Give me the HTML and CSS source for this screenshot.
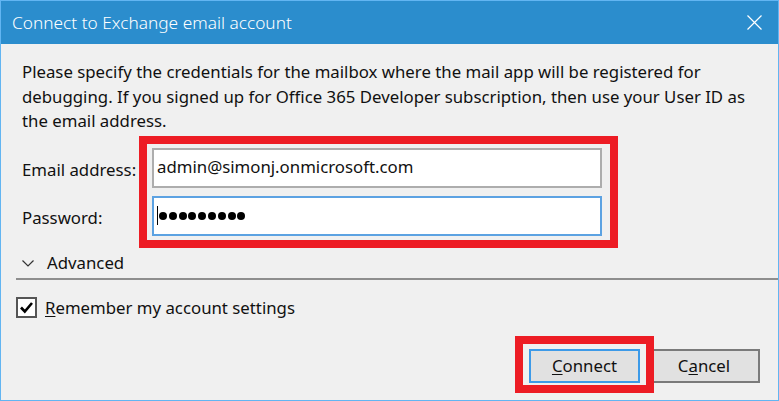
FILE: index.html
```html
<!DOCTYPE html>
<html>
<head>
<meta charset="utf-8">
<link rel="stylesheet" href="styles.css">
</head>
<body>
<div class="window">
  <div class="titlebar">
    <span class="title">Connect to Exchange email account</span>
    <svg class="close" width="15" height="15" viewBox="0 0 15 15"><path d="M0.5 0.5 L14.5 14.5 M14.5 0.5 L0.5 14.5" stroke="#fff" stroke-width="1.2" fill="none"/></svg>
  </div>
  <div class="content">
    <p class="intro">Please specify the credentials for the mailbox where the mail app will be registered for debugging. If you signed up for Office 365 Developer subscription, then use your User ID as the email address.</p>
    <div class="form">
      <div class="labels">
        <div class="label">Email address:</div>
        <div class="label">Password:</div>
      </div>
      <div class="highlight">
        <div class="input">admin@simonj.onmicrosoft.com</div>
        <div class="input focused"><span class="caret"></span><span class="dots"><i></i><i></i><i></i><i></i><i></i><i></i><i></i><i></i><i></i></span></div>
      </div>
    </div>
    <div class="advanced">
      <svg class="chev" width="12" height="7" viewBox="0 0 12 7"><path d="M0.5 0.5 L6 6 L11.5 0.5" stroke="#333" stroke-width="1.2" fill="none"/></svg>
      <span>Advanced</span>
    </div>
    <div class="sep"></div>
    <div class="check-row">
      <span class="checkbox"><svg width="17" height="17" viewBox="0 0 17 17"><path d="M3 8.5 L6.8 12.5 L14 4" stroke="#000" stroke-width="2.6" fill="none"/></svg></span>
      <span><u>R</u>emember my account settings</span>
    </div>
    <div class="buttons">
      <div class="btn-wrap"><div class="btn primary"><u>C</u>onnect</div></div>
      <div class="btn">C<u>a</u>ncel</div>
    </div>
  </div>
</div>
</body>
</html>
```

FILE: styles.css
```css
html, body {
  margin: 0;
  padding: 0;
  background: #f0f0f0;
}
.window {
  width: 777px;
  height: 399px;
  border: 1px solid #62b5f2;
  background: #f0f0f0;
  font-family: "Noto Sans", "Open Sans", sans-serif;
  color: #111;
  overflow: hidden;
}
.titlebar {
  height: 43px;
  background: #2b8dcd;
  display: flex;
  align-items: center;
  justify-content: space-between;
  padding: 0 16px 0 11px;
}
.title {
  color: #fff;
  font-size: 17.3px;
  font-weight: 300;
}
.close { display: block; }
.content {
  display: flex;
  flex-direction: column;
}
.intro {
  margin: 16px 30px 0 21px;
  font-size: 16.8px;
  line-height: 24.5px;
}
.form {
  display: flex;
  margin-top: 2px;
}
.labels {
  width: 117px;
  padding-left: 21px;
  padding-top: 12px;
  display: flex;
  flex-direction: column;
  gap: 8px;
  font-size: 16.8px;
}
.label {
  height: 40px;
  display: flex;
  align-items: center;
  padding-top: 3px;
  box-sizing: border-box;
}
.highlight {
  border: 8px solid #ed1c24;
  padding: 4px 8px 4px 5px;
  display: flex;
  flex-direction: column;
  gap: 8px;
}
.input {
  width: 450px;
  height: 40px;
  box-sizing: border-box;
  border: 2px solid #adadad;
  background: #fff;
  display: flex;
  align-items: center;
  padding: 0 0 3px 3px;
  font-size: 16.8px;
}
.input.focused {
  border-color: #5ca2e2;
  padding-left: 3px;
  padding-bottom: 0;
}
.caret {
  width: 1px;
  height: 19px;
  background: #000;
}
.dots {
  display: flex;
  gap: 1.8px;
  margin-left: 1px;
}
.dots i {
  width: 8px;
  height: 8px;
  border-radius: 50%;
  background: #000;
}
.advanced {
  margin-top: 4px;
  height: 22px;
  display: flex;
  align-items: center;
  padding-left: 21px;
  font-size: 16.8px;
}
.chev { margin-right: 13px; margin-top: 1px; flex: none; }
.sep {
  margin: 4px 0 0 15px;
  height: 2px;
  background: #8e8e8e;
}
.check-row {
  margin: 17px 0 0 15px;
  display: flex;
  align-items: center;
  font-size: 16.8px;
  height: 21px;
}
.checkbox {
  width: 21px;
  height: 21px;
  box-sizing: border-box;
  border: 2px solid #555;
  background: #fff;
  display: flex;
  align-items: center;
  justify-content: center;
  margin-right: 8px;
  flex: none;
}
.checkbox svg { display: block; }
.buttons {
  margin-top: 31px;
  display: flex;
  justify-content: flex-end;
  gap: 8px;
  padding-right: 18px;
}
.btn-wrap { position: relative; }
.btn-wrap::after {
  content: "";
  position: absolute;
  left: -14px;
  right: -14px;
  top: -13px;
  bottom: -10px;
  border: 8px solid #ed1c24;
  pointer-events: none;
}
.btn {
  width: 112px;
  height: 34px;
  box-sizing: border-box;
  border: 2px solid #7a7a7a;
  background: #e1e1e1;
  display: flex;
  align-items: center;
  justify-content: center;
  font-size: 16.8px;
}
.btn.primary {
  width: 111px;
  border-color: #3c9ae8;
}
u { text-underline-offset: 2px; }
```
